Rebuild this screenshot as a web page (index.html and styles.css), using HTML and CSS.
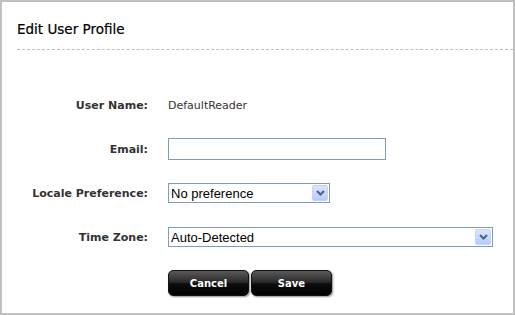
FILE: index.html
```html
<!DOCTYPE html>
<html lang="en">

<head>
    <meta charset="UTF-8">
    <title>Edit User Profile</title>
    <link rel="stylesheet" href="styles.css">
</head>

<body>
    <div id="panel">
        <header id="header">
            <h1>Edit User Profile</h1>
        </header>
        <form id="profileForm" onsubmit="return false;">
            <label class="fieldLabel">User Name:</label>
            <div class="fieldValue"><span class="plainValue">DefaultReader</span></div>

            <label class="fieldLabel" for="emailInput">Email:</label>
            <div class="fieldValue"><input type="text" id="emailInput" name="emailInput" class="textInput"></div>

            <label class="fieldLabel" for="localeInput">Locale Preference:</label>
            <div class="fieldValue">
                <div class="selectBox localeBox">
                    <select id="localeInput" name="localeInput">
                        <option>No preference</option>
                    </select>
                    <span class="selectArrow">
                        <svg width="9" height="6" viewBox="0 0 9 6"><path d="M1 1 L4.5 4.5 L8 1" fill="none" stroke="#4d6185" stroke-width="2"/></svg>
                    </span>
                </div>
            </div>

            <label class="fieldLabel" for="zoneInput">Time Zone:</label>
            <div class="fieldValue">
                <div class="selectBox zoneBox">
                    <select id="zoneInput" name="zoneInput">
                        <option>Auto-Detected</option>
                    </select>
                    <span class="selectArrow">
                        <svg width="9" height="6" viewBox="0 0 9 6"><path d="M1 1 L4.5 4.5 L8 1" fill="none" stroke="#4d6185" stroke-width="2"/></svg>
                    </span>
                </div>
            </div>

            <span></span>
            <div class="buttonRow">
                <button class="blackButton">Cancel</button>
                <button class="blackButton">Save</button>
            </div>
        </form>
    </div>
</body>

</html>
```

FILE: styles.css
```css
html,
body {
    margin: 0;
    padding: 0;
    width: 100%;
    height: 100%;
}

body {
    font-family: 'DejaVu Sans', Verdana, sans-serif;
    background-color: #fff;
}

#panel {
    box-sizing: border-box;
    width: 515px;
    height: 315px;
    border: 2px solid #c0c0c0;
    background-color: #fff;
    overflow: hidden;
}

#header {
    margin-left: 15px;
    padding-top: 19px;
    height: 28px;
    border-bottom: 1px dashed #c0c0c0;
}

#header h1 {
    margin: 0;
    font-size: 13.5px;
    font-weight: normal;
    color: #000;
    -webkit-text-stroke: 0.2px #000;
}

#profileForm {
    display: grid;
    grid-template-columns: 146px 1fr;
    grid-auto-rows: 22px;
    column-gap: 20px;
    row-gap: 22px;
    padding-top: 44px;
}

.fieldLabel {
    text-align: right;
    align-self: center;
    font-size: 11px;
    font-weight: bold;
    color: #333;
}

.fieldValue {
    display: flex;
    align-items: center;
}

.plainValue {
    font-size: 11px;
    color: #333;
}

.textInput {
    box-sizing: border-box;
    width: 218px;
    height: 22px;
    margin: 0;
    border: 1px solid #7f9db9;
    padding: 2px 3px;
    font-family: 'Liberation Sans', Arial, sans-serif;
    font-size: 13px;
}

.selectBox {
    box-sizing: border-box;
    height: 20px;
    display: flex;
    align-items: center;
    border: 1px solid #7f9db9;
    background-color: #fff;
    padding-right: 1px;
}

.localeBox {
    width: 162px;
}

.zoneBox {
    width: 325px;
}

.selectBox select {
    appearance: none;
    -webkit-appearance: none;
    flex: 1;
    border: none;
    outline: none;
    background: transparent;
    margin: 0;
    padding: 0 2px;
    font-family: 'Liberation Sans', Arial, sans-serif;
    font-size: 13px;
    color: #000;
}

.selectArrow {
    box-sizing: border-box;
    width: 16px;
    height: 16px;
    display: flex;
    align-items: center;
    justify-content: center;
    border: 1px solid #c3d3fd;
    border-radius: 2px;
    background: linear-gradient(to bottom, #dbe6fe, #b7cbf9);
}

.buttonRow {
    display: flex;
    gap: 2px;
    align-items: flex-start;
    margin-top: 0;
}

.blackButton {
    box-sizing: border-box;
    width: 81px;
    height: 26px;
    flex: none;
    border: 1px solid #111;
    border-radius: 5px;
    background: linear-gradient(to bottom, #5a5a5a 0%, #2c2c2c 45%, #0c0c0c 55%, #000 100%);
    box-shadow: 1px 1px 2px rgba(0, 0, 0, 0.45);
    color: #fff;
    font-family: 'DejaVu Sans', Verdana, sans-serif;
    font-size: 10px;
    font-weight: bold;
    padding: 0;
}
```
